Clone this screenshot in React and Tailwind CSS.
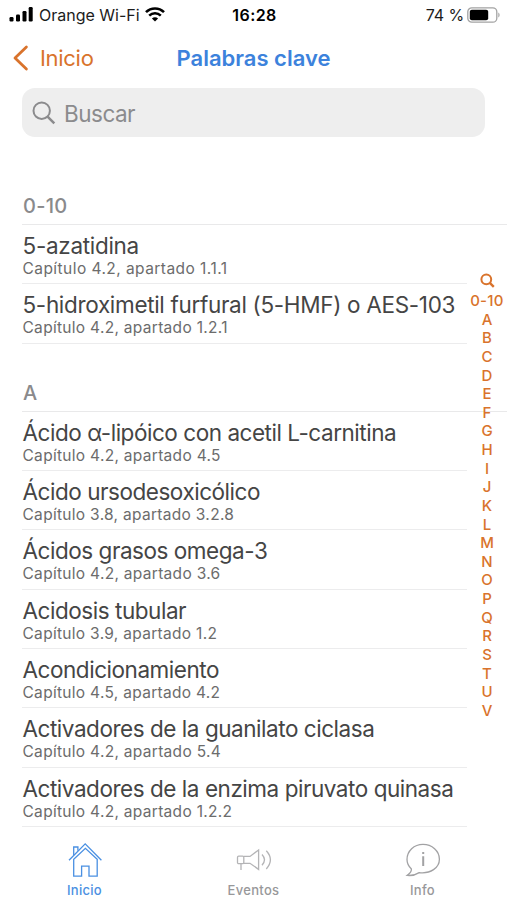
const sections = [
  {
    title: "0-10",
    items: [
      { name: "5-azatidina", ref: "Capítulo 4.2, apartado 1.1.1", spacing: "tracking-[-0.3px]", refSpacing: "tracking-[0.45px]" },
      { name: "5-hidroximetil furfural (5-HMF) o AES-103", ref: "Capítulo 4.2, apartado 1.2.1", spacing: "tracking-[-0.32px]" }
    ]
  },
  {
    title: "A",
    items: [
      { name: "Ácido α-lipóico con acetil L-carnitina", ref: "Capítulo 4.2, apartado 4.5" },
      { name: "Ácido ursodesoxicólico", ref: "Capítulo 3.8, apartado 3.2.8" },
      { name: "Ácidos grasos omega-3", ref: "Capítulo 4.2, apartado 3.6" },
      { name: "Acidosis tubular", ref: "Capítulo 3.9, apartado 1.2" },
      { name: "Acondicionamiento", ref: "Capítulo 4.5, apartado 4.2" },
      { name: "Activadores de la guanilato ciclasa", ref: "Capítulo 4.2, apartado 5.4" },
      { name: "Activadores de la enzima piruvato quinasa", ref: "Capítulo 4.2, apartado 1.2.2" }
    ]
  }
];

const letters = "ABCDEFGHIJKLMNOPQRSTUV".split("");

function StatusBar() {
  return (
    <div className="grid h-[30px] grid-cols-[1fr_auto_1fr] items-center pr-[7px] pl-[9px] text-black">
      <div className="flex items-center">
        <svg className="h-[15px] w-6" viewBox="0 0 24 15" fill="currentColor">
          <rect x="0.5" y="10" width="4" height="4.5" rx="1.2" />
          <rect x="7" y="7.5" width="4" height="7" rx="1.2" />
          <rect x="13.5" y="4" width="4" height="10.5" rx="1.2" />
          <rect x="19.7" y="0" width="4" height="14.5" rx="1.2" />
        </svg>
        <span className="ml-[6px] text-base text-[#1c1c1c]">Orange Wi-Fi</span>
        <svg className="ml-[5px] h-[15px] w-5" viewBox="0 0 20 15" fill="none" stroke="currentColor">
          <path d="M1 5.2 C6 0.2 14 0.2 19 5.2" strokeWidth="2.6" />
          <path d="M4.2 8.7 C7.5 5.4 12.5 5.4 15.8 8.7" strokeWidth="2.5" />
          <path d="M10 14.6 L6.9 11.4 C8.6 9.8 11.4 9.8 13.1 11.4 Z" fill="currentColor" stroke="none" />
        </svg>
      </div>
      <span className="text-base font-semibold tracking-[0.4px]">16:28</span>
      <div className="flex items-center justify-end">
        <span className="text-base tracking-[-0.1px] text-[#1c1c1c]">74 %</span>
        <svg className="ml-[3px] h-4 w-[33px]" viewBox="0 0 33 16">
          <rect x="0.8" y="0.8" width="29" height="14.4" rx="4" fill="none" stroke="#a3a3a3" strokeWidth="1.3" />
          <rect x="2.8" y="2.8" width="18.4" height="10.4" rx="2" fill="#000" />
          <path d="M31.3 5.5 C33 6.3 33 9.7 31.3 10.5 Z" fill="#a3a3a3" />
        </svg>
      </div>
    </div>
  );
}

function NavBar() {
  return (
    <header className="grid h-[58px] grid-cols-[1fr_auto_1fr] items-center pb-[2px]">
      <button className="flex items-center text-[#d9732c]">
        <svg className="ml-[13px] h-[26px] w-4" viewBox="0 0 16 26" fill="none" stroke="currentColor" strokeWidth="2.8" strokeLinecap="round" strokeLinejoin="round">
          <path d="M13.4 2 L2 13 L13.4 24" />
        </svg>
        <span className="ml-[11px] pt-[2px] text-[22px] tracking-[-0.3px]">Inicio</span>
      </button>
      <h1 className="pt-px text-[22px] font-semibold text-[#3c82dc]">Palabras clave</h1>
    </header>
  );
}

function SearchField() {
  return (
    <div className="mr-[22px] ml-[22px] flex h-[49px] items-center rounded-[13px] bg-[#eeeeee] pt-[2px] pl-[10px] text-[#8b8b8d]">
      <svg className="h-6 w-6" viewBox="0 0 24 24" fill="none" stroke="currentColor" strokeWidth="2">
        <circle cx="9.7" cy="9.7" r="8.2" />
        <path d="M15.6 15.6 L22.3 22.3" strokeWidth="2.5" />
      </svg>
      <span className="ml-2 text-[22.5px] tracking-[-0.5px]">Buscar</span>
    </div>
  );
}

function Section({ title, items }) {
  return (
    <section>
      <h2 className="flex h-[68px] items-end border-b-[1.5px] border-[#e9e9ea] pb-[3px] pl-px text-[20px] font-medium tracking-[0.3px] text-[#8a8a8c]">
        {title}
      </h2>
      <ul className="mr-[40px]">
        {items.map((item) => (
          <li key={item.name} className="h-[59.35px] border-b-[1.5px] border-[#ececed] pt-[7px] pl-[0.5px]">
            <p className={`text-[22.5px] leading-7 whitespace-nowrap text-[#454545] ${item.spacing || "tracking-[-0.46px]"}`}>
              {item.name}
            </p>
            <p className={`text-[15.5px] leading-[18px] text-[#6c6c6c] ${item.refSpacing || "tracking-[0.3px]"}`}>
              {item.ref}
            </p>
          </li>
        ))}
      </ul>
    </section>
  );
}

function IndexBar() {
  return (
    <nav className="absolute top-[273px] right-0 flex w-10 flex-col items-center text-[15px] font-medium text-[#d9732c]">
      <svg className="mb-[4px] h-[15px] w-[15px]" viewBox="0 0 15 15" fill="none" stroke="currentColor" strokeWidth="2">
        <circle cx="6.3" cy="6.3" r="4.9" />
        <path d="M9.8 9.8 L13.8 13.8" strokeWidth="2.4" />
      </svg>
      <span className="leading-[18.62px] tracking-[0.3px] whitespace-nowrap">0-10</span>
      {letters.map((letter) => (
        <span key={letter} className="leading-[18.62px]">{letter}</span>
      ))}
    </nav>
  );
}

function TabBar() {
  return (
    <footer className="grid h-[73px] grid-cols-3 pt-[14px] text-[13px] font-medium tracking-[0.3px] text-[#98989a]">
      <div className="flex flex-col items-center text-[#4a90e2]">
        <svg className="h-9 w-9" viewBox="0 0 36 36" fill="none" stroke="currentColor" strokeWidth="1.3">
          <path d="M2 19.2 L18.2 2.8 L34.4 19.2" />
          <path d="M6.7 18.3 V35.2 H14.6 V25.2 H22 V35.2 H30.2 V18.3 L18.4 7.3 Z" />
          <path d="M6.7 14.2 V6 H10.9 V9.8" />
        </svg>
        <span className="mt-[5px] leading-4">Inicio</span>
      </div>
      <div className="flex flex-col items-center">
        <svg className="h-9 w-9" viewBox="0 0 36 36" fill="none" stroke="#b4b4b6" strokeWidth="1.3">
          <rect x="1.5" y="15.2" width="6.3" height="7.4" rx="1.2" />
          <path d="M7.8 15.4 H14 L22.6 9 V28.4 L14 22.3 H7.8" />
          <path d="M5 22.6 V29" />
          <path d="M26 13.5 Q31 18.8 26 24.2 M30.3 9.8 Q38.5 18.8 30.3 28" />
        </svg>
        <span className="mt-[5px] leading-4">Eventos</span>
      </div>
      <div className="flex flex-col items-center">
        <svg className="h-9 w-9" viewBox="0 0 36 36" fill="none" stroke="#a2a2a4" strokeWidth="1.3">
          <path d="M14.2 31.6 C10.5 34 6 34.8 2.2 34.4 C4.8 32.6 6.6 30.4 6.4 28 C3.5 25.2 2 22 2 18.5 C2 10 9 3.4 18 3.4 C27 3.4 34.4 10 34.4 18.2 C34.4 26.8 25.5 33 14.2 31.6 Z" />
          <path d="M18.2 15.2 V25 M18.2 11 V13" strokeWidth="2" />
        </svg>
        <span className="mt-[5px] leading-4">Info</span>
      </div>
    </footer>
  );
}

export default function App() {
  return (
    <div className="relative flex h-[900px] w-[507px] flex-col overflow-hidden bg-white font-['Inter',sans-serif]">
      <StatusBar />
      <NavBar />
      <SearchField />
      <main className="flex-1 pt-5 pl-[22px]">
        {sections.map((section) => (
          <Section key={section.title} title={section.title} items={section.items} />
        ))}
      </main>
      <IndexBar />
      <TabBar />
    </div>
  );
}
